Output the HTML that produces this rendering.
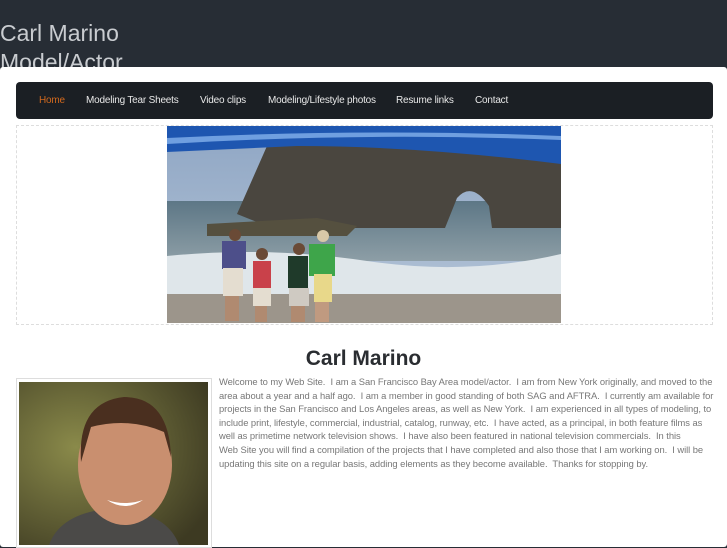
<!DOCTYPE html>
<html><head><meta charset="utf-8"><style>
*{margin:0;padding:0;box-sizing:border-box}
body{width:727px;height:545px;overflow:hidden;background:#272d35;font-family:"Liberation Sans",Arial,sans-serif;position:relative}
.t{position:absolute;left:0;color:#c9ccd0;font-size:23px}
.panel{position:absolute;left:0;top:67px;width:727px;height:480px;background:#fff;border-radius:3px}
.nav{position:absolute;left:16px;top:82px;width:697px;height:37px;background:#1b1f24;border-radius:4px}
.nav span{position:absolute;top:13px;font-size:10px;color:#e8e8e8;letter-spacing:-0.2px}
.frame{position:absolute;left:16px;top:125px;width:697px;height:200px;border:1px dashed #ddd}
h1{position:absolute;left:0;width:727px;text-align:center;top:347px;font-size:21px;color:#2a2d31;font-weight:bold}
.pf{position:absolute;left:16px;top:378px;width:196px;height:170px;border:1px solid #ddd}
p{position:absolute;left:219px;top:375px;width:505px;font-size:9.4px;line-height:13.6px;color:#777;white-space:nowrap;letter-spacing:-0.05px}
</style></head><body>
<div class="t" style="top:20px">Carl Marino</div>
<div class="t" style="top:49px">Model/Actor</div>
<div class="panel"></div>
<div class="nav">
<span style="left:23px;color:#d2691e">Home</span>
<span style="left:70px">Modeling Tear Sheets</span>
<span style="left:184px">Video clips</span>
<span style="left:252px">Modeling/Lifestyle photos</span>
<span style="left:380px">Resume links</span>
<span style="left:459px">Contact</span>
</div>
<div class="frame"></div>
<svg style="position:absolute;left:167px;top:126px" width="394" height="197" viewBox="0 0 394 197">
<defs><linearGradient id="sky" x1="0" y1="0" x2="0" y2="1"><stop offset="0" stop-color="#8fa6c4"/><stop offset="1" stop-color="#b6c6d8"/></linearGradient>
<linearGradient id="sea" x1="0" y1="0" x2="0" y2="1"><stop offset="0" stop-color="#5d7786"/><stop offset="1" stop-color="#8d9ea6"/></linearGradient></defs>
<rect width="394" height="197" fill="url(#sky)"/>
<rect y="75" width="394" height="60" fill="url(#sea)"/>
<path d="M0 130 Q100 120 200 135 T394 128 L394 175 L0 170Z" fill="#dfe6ea"/>
<rect y="168" width="394" height="29" fill="#9c958b"/>
<path d="M70 88 L100 20 L300 18 L394 25 L394 102 L325 102 L322 80 Q305 55 290 72 L278 102 L160 102 L95 98Z" fill="#4a463f"/>
<path d="M40 98 L150 92 L190 100 L180 110 L40 110Z" fill="#55503f"/>
<path d="M0 0 L394 0 L394 38 Q250 20 130 20 L0 26Z" fill="#1e56b0"/>
<path d="M0 12 Q200 2 394 10 L394 14 Q200 6 0 18Z" fill="#6f9fe0"/>
<rect x="55" y="115" width="24" height="28" fill="#4d4f8a"/><rect x="56" y="142" width="20" height="28" fill="#e4ddd0"/><rect x="58" y="170" width="14" height="25" fill="#b08a70"/><circle cx="68" cy="109" r="6" fill="#6a4a36"/>
<rect x="86" y="135" width="18" height="28" fill="#c9414a"/><rect x="86" y="162" width="18" height="18" fill="#e4ddd0"/><rect x="88" y="180" width="12" height="16" fill="#b08a70"/><circle cx="95" cy="128" r="6" fill="#6a4a36"/>
<rect x="121" y="130" width="20" height="32" fill="#1f3a2a"/><rect x="122" y="162" width="20" height="18" fill="#cfcac2"/><rect x="124" y="180" width="14" height="16" fill="#b08a70"/><circle cx="132" cy="123" r="6" fill="#6a4a36"/>
<rect x="142" y="118" width="26" height="32" fill="#3ea54a"/><rect x="147" y="148" width="18" height="28" fill="#e8d88a"/><rect x="148" y="176" width="14" height="20" fill="#c09a80"/><circle cx="156" cy="110" r="6" fill="#d8c8a8"/>
</svg>
<h1>Carl Marino</h1>
<div class="pf"></div>
<svg style="position:absolute;left:19px;top:382px" width="189" height="163" viewBox="0 0 189 163">
<defs><radialGradient id="bg" cx="0.3" cy="0.4" r="0.8"><stop offset="0" stop-color="#8a8a4a"/><stop offset="1" stop-color="#3d3a22"/></radialGradient></defs>
<rect width="189" height="163" fill="url(#bg)"/>
<path d="M30 163 Q40 135 80 128 L110 128 Q150 135 160 163Z" fill="#4b4a48"/>
<ellipse cx="106" cy="83" rx="47" ry="60" fill="#c98f6f"/>
<path d="M62 80 Q58 20 105 15 Q150 15 152 75 L145 50 Q110 35 72 45Z" fill="#4a2f1f"/>
<path d="M88 118 Q106 130 124 118 Q106 124 88 118Z" fill="#fff"/>
</svg>
<p>Welcome to my Web Site.&nbsp; I am a San Francisco Bay Area model/actor.&nbsp; I am from New York originally, and moved to the<br>area about a year and a half ago.&nbsp; I am a member in good standing of both SAG and AFTRA.&nbsp; I currently am available for<br>projects in the San Francisco and Los Angeles areas, as well as New York.&nbsp; I am experienced in all types of modeling, to<br>include print, lifestyle, commercial, industrial, catalog, runway, etc.&nbsp; I have acted, as a principal, in both feature films as<br>well as primetime network television shows.&nbsp; I have also been featured in national television commercials.&nbsp; In this<br>Web Site you will find a compilation of the projects that I have completed and also those that I am working on.&nbsp; I will be<br>updating this site on a regular basis, adding elements as they become available.&nbsp; Thanks for stopping by.</p>
</body></html>
